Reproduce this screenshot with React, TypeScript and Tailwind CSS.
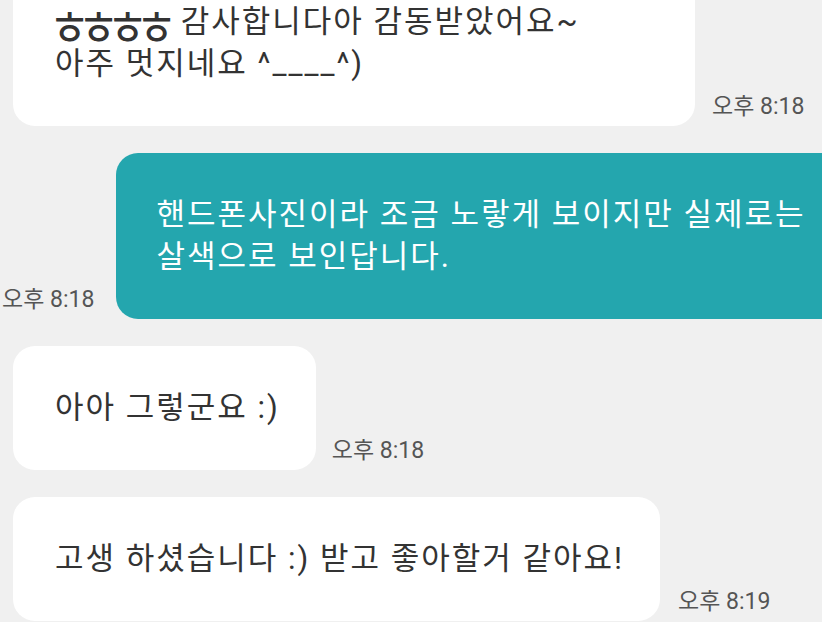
import React from "react";

const Stamp = ({ time }: { time: string }) => (
  <span className="shrink-0 mb-[6px] text-[23px] leading-[26px] text-[#555555] whitespace-nowrap">
    {time}
  </span>
);

// compatibility jamo renders tiny in Noto, stretch it to syllable size
const Jamo = () => (
  <span className="inline-block w-[29px] text-center tracking-normal scale-x-[1.45] scale-y-[1.6] translate-y-[3px] origin-[50%_12px]">
    ㅎ
  </span>
);

const App = () => {
  return (
    <div className="w-[822px] h-[622px] overflow-hidden bg-[#f0f0f0] font-['Roboto','Noto_Sans_CJK_KR',sans-serif]">
      <div className="flex flex-col gap-[27px] -mt-[40px]">
        {/* received */}
        <div className="flex items-end gap-[17px] pl-[13px]">
          <div className="w-[682px] shrink-0 rounded-[22px] bg-white pl-[42px] pr-[38px] py-[41px] text-[31px] leading-[42px] tracking-[2px] text-[#333333]">
            <Jamo />
            <Jamo />
            <Jamo />
            <Jamo />
            {" 감사합니다아 감동받았어요~"}
            <br />
            아주 멋지네요 ^____^)
          </div>
          <Stamp time="오후 8:18" />
        </div>

        {/* sent */}
        <div className="flex items-end gap-[22px] pl-[2px]">
          <Stamp time="오후 8:18" />
          <div className="shrink-0 whitespace-nowrap rounded-[22px] bg-[#24a6ae] px-[40px] py-[41px] text-[31px] leading-[42px] tracking-[2px] text-white">
            핸드폰사진이라 조금 노랗게 보이지만 실제로는
            <br />
            살색으로 보인답니다.
          </div>
        </div>

        <div className="flex items-end gap-[16px] pl-[13px]">
          <div className="shrink-0 whitespace-nowrap rounded-[22px] bg-white pl-[42px] pr-[36px] py-[41px] text-[31px] leading-[42px] tracking-[2px] text-[#333333]">
            아아 그렇군요 :)
          </div>
          <Stamp time="오후 8:18" />
        </div>

        <div className="flex items-end gap-[18px] pl-[13px]">
          <div className="shrink-0 whitespace-nowrap rounded-[22px] bg-white pl-[42px] pr-[36px] py-[41px] text-[31px] leading-[42px] tracking-[2px] text-[#333333]">
            고생 하셨습니다 :) 받고 좋아할거 같아요!
          </div>
          <Stamp time="오후 8:19" />
        </div>
      </div>
    </div>
  );
};

export default App;
